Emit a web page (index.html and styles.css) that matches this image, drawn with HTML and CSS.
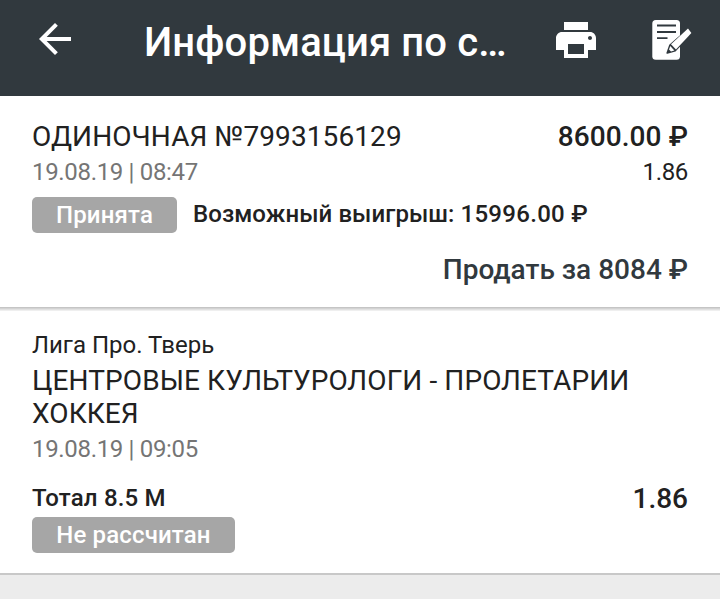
FILE: index.html
```html
<!DOCTYPE html>
<html lang="ru">
<head>
    <meta charset="UTF-8">
    <meta name="viewport" content="width=device-width, initial-scale=1.0">
    <title>Информация по ставке</title>
    <link rel="stylesheet" href="styles.css">
</head>
<body>
    <header>
        <svg class="back" viewBox="0 0 24 24"><path d="M20 11H7.83l5.59-5.59L12 4l-8 8 8 8 1.41-1.41L7.83 13H20v-2z"/></svg>
        <h1>Информация по с…</h1>
        <svg class="print" viewBox="0 0 24 24"><path d="M19 8H5c-1.66 0-3 1.34-3 3v6h4v4h12v-4h4v-6c0-1.66-1.34-3-3-3zm-3 11H8v-5h8v5zm3-7c-.55 0-1-.45-1-1s.45-1 1-1 1 .45 1 1-.45 1-1 1zm-1-9H6v4h12V3z"/></svg>
        <svg class="edit" viewBox="0 0 40 40">
            <rect x="0.3" width="27.7" height="39.7" rx="3.5"/>
            <path class="lines" d="M5 5.5h19M5 12h19M5 18.2h10.5"/>
            <path class="gap" d="M36.3 9L18 25l-2.8 8 8-2.3L39.5 13z"/>
            <path d="M36 8.5L19 24.3l5 5.2L39.4 13z"/>
            <path d="M18.3 26l-1.3 3.6 2 2 3.3-1.2z"/>
        </svg>
    </header>
    <section class="bet">
        <div class="row title">
            <span>ОДИНОЧНАЯ №7993156129</span>
            <span class="sum">8600.00 ₽</span>
        </div>
        <div class="row info">
            <span class="date">19.08.19 | 08:47</span>
            <span class="odds">1.86</span>
        </div>
        <div class="status">
            <span class="badge accepted">Принята</span>
            <span class="win">Возможный выигрыш: <span class="amount">15996.00 ₽</span></span>
        </div>
        <div class="sell">Продать за 8084 ₽</div>
    </section>
    <section class="event">
        <div class="league">Лига Про. Тверь</div>
        <h2>ЦЕНТРОВЫЕ КУЛЬТУРОЛОГИ - ПРОЛЕТАРИИ ХОККЕЯ</h2>
        <div class="date">19.08.19 | 09:05</div>
        <div class="row outcome">
            <span class="total">Тотал 8.5 М</span>
            <span class="sum">1.86</span>
        </div>
        <span class="badge pending">Не рассчитан</span>
    </section>
</body>
</html>
```
FILE: styles.css
```css
* {
    box-sizing: border-box;
}
body {
    margin: 0;
    background-color: #ececec;
    color: #212121;
    font-family: Roboto, "Liberation Sans", sans-serif;
    font-size: 24px;
}
header {
    display: flex;
    height: 96px;
    padding: 15px 28px 0 31px;
    background-color: #31393e;
    color: white;
}
header svg {
    flex: none;
    fill: white;
}
.back {
    width: 48px;
    height: 48px;
}
h1 {
    width: 407px;
    margin: 1px 0 0 65px;
    font-size: 40px;
    font-weight: 500;
    line-height: 54px;
    letter-spacing: 0.12px;
    white-space: nowrap;
}
.print {
    width: 48px;
    height: 48px;
    margin: 1px 0 0 1px;
}
.edit {
    width: 40px;
    height: 40px;
    margin: 5px 0 0 52px;
}
.edit .lines {
    fill: none;
    stroke: #31393e;
    stroke-width: 1.8;
}
.edit .gap {
    fill: #31393e;
    stroke: #31393e;
    stroke-width: 1.6;
    stroke-linejoin: round;
}
section {
    padding: 0 32px;
    background-color: white;
}
.bet {
    height: 215px;
    padding-top: 23px;
    /* тень под карточкой */
    background-image: linear-gradient(#bebebe, #f6f6f6);
    background-position: bottom;
    background-repeat: no-repeat;
    background-size: 100% 4px;
}
.event {
    height: 264px;
    padding-top: 18px;
    border-bottom: 2px solid #c8c8c8;
}
.row {
    display: flex;
    justify-content: space-between;
}
.title {
    font-size: 28px;
    line-height: 36px;
    letter-spacing: 0.1px;
}
.sum {
    font-size: 28px;
    font-weight: 500;
}
.date {
    color: #757575;
    line-height: 34px;
    letter-spacing: -0.33px;
}
.odds {
    line-height: 34px;
    letter-spacing: -0.33px;
}
.status {
    display: flex;
    margin-top: 8px;
}
.badge {
    display: inline-block;
    height: 36px;
    border-radius: 5px;
    background-color: #a6a6a6;
    color: white;
    font-weight: 500;
    line-height: 36px;
    letter-spacing: 0.15px;
    text-align: center;
}
.accepted {
    width: 145px;
}
.pending {
    width: 203px;
    margin-top: 1px;
}
.win {
    margin-left: 16px;
    font-weight: 500;
    line-height: 34px;
    letter-spacing: 0.07px;
}
.amount {
    letter-spacing: 0.3px;
}
.sell {
    margin-top: 19px;
    color: #31393e;
    font-size: 28px;
    font-weight: 500;
    line-height: 36px;
    text-align: right;
}
.league {
    line-height: 32px;
}
h2 {
    margin: 3px 0 2px;
    font-size: 28px;
    font-weight: 400;
    line-height: 33px;
    letter-spacing: 0.1px;
}
.outcome {
    align-items: center;
    height: 36px;
    margin-top: 14px;
}
.total {
    font-weight: 500;
    letter-spacing: 0.2px;
}
```
